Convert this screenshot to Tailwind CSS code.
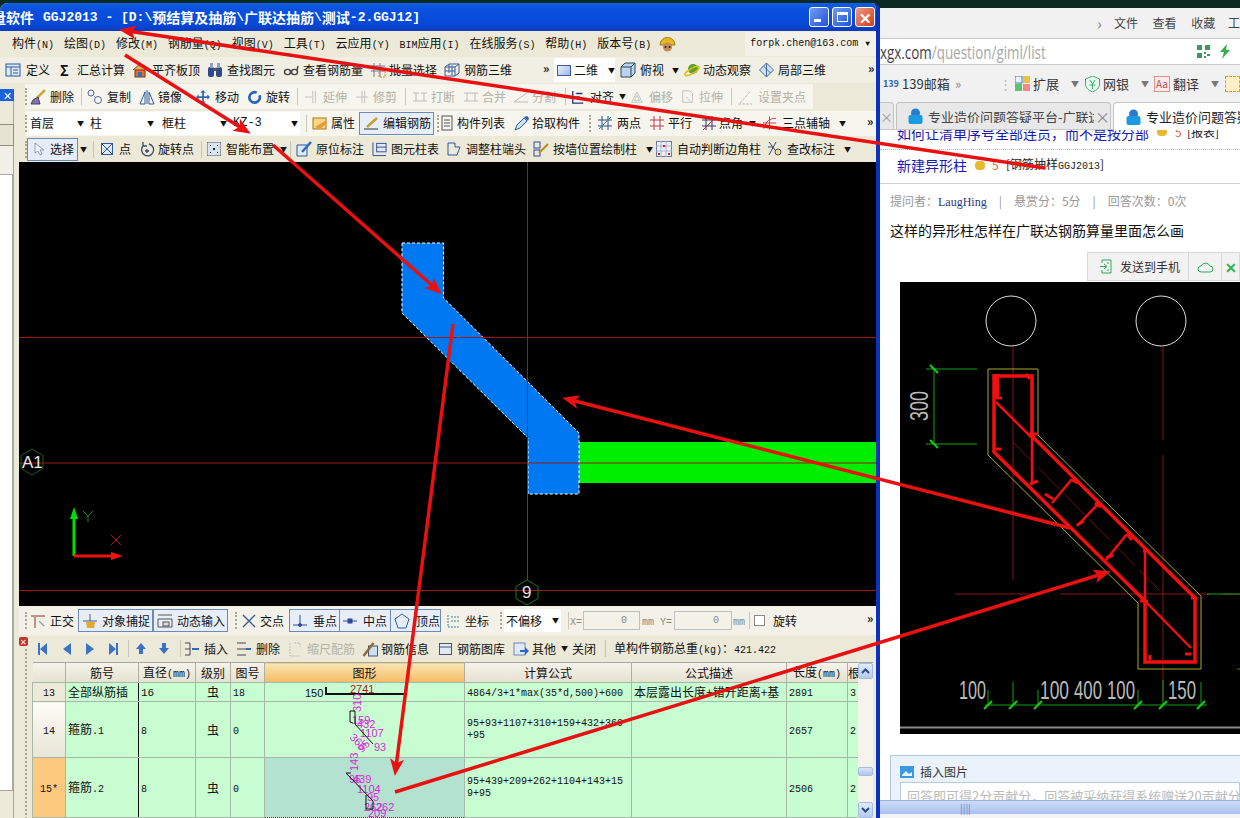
<!DOCTYPE html>
<html lang="zh">
<head>
<meta charset="UTF-8">
<title>GGJ2013</title>
<script src="https://cdn.jsdelivr.net/npm/@tailwindcss/browser@4"></script>
</head>
<body class="relative w-[1240px] h-[818px] overflow-hidden bg-[#0b2a22] text-[12px] leading-none text-[#111] font-['Noto_Sans_CJK_SC','Liberation_Sans',sans-serif] [&_i]:not-italic [&_i]:text-[10px] [&_i]:font-['Liberation_Mono',monospace]">

<div class="flex h-[818px]">

  <!-- drawing program window -->
  <div class="w-[880px] h-[815px] mt-[3px] shrink-0 flex flex-col bg-[#ece9d8] rounded-t-lg border-r-4 border-[#0a32c0] overflow-hidden">
    <div class="h-[28px] shrink-0 flex items-center bg-[linear-gradient(#0f5fe8,#0a52e0_20%,#0648d8_75%,#0a3cc0)] text-white">
      <div class="w-[809px] shrink-0 flex items-center font-bold whitespace-nowrap -ml-[8px] pr-[-8px] text-[14px]">
        <span>量软件</span><span class="font-['Liberation_Mono',monospace] text-[13px] ml-[9px]">GGJ2013 - [D:\</span><span>预结算及抽筋</span><span class="font-['Liberation_Mono',monospace] text-[13px]">\</span><span>广联达抽筋</span><span class="font-['Liberation_Mono',monospace] text-[13px]">\</span><span>测试</span><span class="font-['Liberation_Mono',monospace] text-[13px]">-2.GGJ12]</span>
      </div>
      <div class="flex gap-[3px] ml-[8px]">
        <div class="w-[20px] h-[20px] rounded-[3px] border border-white bg-[linear-gradient(135deg,#6f9cf0,#2252d8)] flex items-end pl-[4px] pb-[4px]"><div class="w-[7px] h-[3px] bg-white"></div></div>
        <div class="w-[20px] h-[20px] rounded-[3px] border border-white bg-[linear-gradient(135deg,#6f9cf0,#2252d8)] flex items-center justify-center"><div class="w-[11px] h-[10px] border border-white border-t-[3px]"></div></div>
        <div class="w-[20px] h-[20px] rounded-[3px] border border-white bg-[linear-gradient(135deg,#f09a80,#d03c18)] flex items-center justify-center text-white text-[15px] font-bold">✕</div>
      </div>
    </div>

    <!-- menu -->
    <div class="h-[26px] shrink-0 flex items-center pl-[12px] whitespace-nowrap">
      <span class="w-[52px]">构件<i>(N)</i></span>
      <span class="w-[52px]">绘图<i>(D)</i></span>
      <span class="w-[52px]">修改<i>(M)</i></span>
      <span class="w-[64px]">钢筋量<i>(Q)</i></span>
      <span class="w-[52px]">视图<i>(V)</i></span>
      <span class="w-[52px]">工具<i>(T)</i></span>
      <span class="w-[64px]">云应用<i>(Y)</i></span>
      <span class="w-[70px]"><i>BIM</i>应用<i>(I)</i></span>
      <span class="w-[76px]">在线服务<i>(S)</i></span>
      <span class="w-[52px]">帮助<i>(H)</i></span>
      <span class="w-[62px]">版本号<i>(B)</i></span>
      <svg class="w-[17px] h-[17px]" viewBox="0 0 17 17"><path d="M1 9a7.5 7.5 0 0 1 15 0z" fill="#e8b820" stroke="#a07810"/><circle cx="8.5" cy="11" r="4.6" fill="#c88a5a"/><circle cx="6.5" cy="11" r="1" fill="#222"/><circle cx="10.500" cy="11" r="1" fill="#222"/></svg>
      <div class="ml-[69px] w-[131px] h-[24px] bg-[#f4f2e8] flex items-center pl-[5px] font-['Liberation_Mono',monospace] text-[10px]">forpk.chen@163.com<span class="ml-[7px] text-[8px]">▼</span></div>
    </div>

    <!-- toolbar row 1 -->
    <div class="h-[26px] shrink-0 flex items-center pl-[5px] bg-[#f1efe4] whitespace-nowrap">
      <span class="flex items-center gap-[5px] w-[55px]"><svg class="w-4 h-4" viewBox="0 0 16 16"><rect x="1" y="2" width="14" height="12" fill="#dfe9f8" stroke="#2b5a9c"/><path d="M1 5h14M6 5v9M8 8h5M8 11h5" stroke="#2b5a9c"/></svg>定义</span>
      <span class="flex items-center gap-[5px] w-[72px]"><span class="w-3 text-[14px] font-bold">Σ</span>汇总计算</span>
      <span class="flex items-center gap-[4px] w-[75px]"><svg class="w-4 h-4" viewBox="0 0 16 16"><path d="M1 8l7-6 7 6" fill="#e8b060" stroke="#7a4a18"/><rect x="3" y="8" width="10" height="7" fill="#e86a30" stroke="#7a3a18"/><rect x="6" y="10" width="4" height="5" fill="#3a6ab0"/></svg>平齐板顶</span>
      <span class="flex items-center gap-[4px] w-[76px]"><svg class="w-4 h-4" viewBox="0 0 16 16"><rect x="1" y="5" width="6" height="10" rx="2" fill="#2b4a8c"/><rect x="9" y="5" width="6" height="10" rx="2" fill="#2b4a8c"/><rect x="3" y="1" width="3" height="5" fill="#8aa0c8"/><rect x="10" y="1" width="3" height="5" fill="#8aa0c8"/><rect x="6" y="6" width="4" height="3" fill="#555"/></svg>查找图元</span>
      <span class="flex items-center gap-[4px] w-[87px]"><svg class="w-4 h-4" viewBox="0 0 16 16" fill="none" stroke="#444" stroke-width="1.4"><ellipse cx="4.5" cy="10" rx="3" ry="2.6"/><ellipse cx="11.5" cy="10" rx="3" ry="2.6"/><path d="M7.5 10h1M14 8l1-4"/></svg>查看钢筋量</span>
      <span class="flex items-center gap-[3px] w-[74px]"><svg class="w-4 h-4" viewBox="0 0 16 16" fill="none" stroke="#6a7aa0"><path d="M1 4h14M1 9h14M4 1v14M10 1v14" /><rect x="9" y="9" width="6" height="6" stroke="#c89030" stroke-dasharray="2 1"/></svg>批量选择</span>
      <span class="flex items-center gap-[4px] w-[99px]"><svg class="w-4 h-4" viewBox="0 0 16 16" fill="none" stroke="#3a5aa0"><path d="M1 5l4-3h10v9l-4 3H1zM1 5h10v9M11 5l4-3M5 2v9M8 3.500v10M1 9h10"/></svg>钢筋三维</span>
      <span class="w-[11px] font-bold text-[12px] mb-[5px]">»</span>
      <span class="flex items-center gap-[3px] w-[61px] h-[24px] bg-white pl-[3px]"><span class="w-[15px] h-[11px] bg-[linear-gradient(135deg,#e8f0fc,#9ab8e8)] border border-[#3a5aa0]"></span>二维<span class="ml-[7px] text-[7px]">▼</span></span>
      <span class="flex items-center gap-[4px] w-[64px] ml-[5px]"><svg class="w-4 h-4" viewBox="0 0 16 16"><path d="M1 5l4-4h10v10l-4 4H1z" fill="#b9d4f0" stroke="#345"/><path d="M1 5h10v10M11 5l4-4" fill="none" stroke="#345"/></svg>俯视<span class="ml-[4px] text-[7px]">▼</span></span>
      <span class="flex items-center gap-[3px] w-[74px]"><svg class="w-4 h-4" viewBox="0 0 16 16"><circle cx="9" cy="7" r="5" fill="#5aa02a"/><ellipse cx="8" cy="9" rx="8" ry="2.500" transform="rotate(-30 8 9)" fill="none" stroke="#d8c020" stroke-width="1.500"/></svg>动态观察</span>
      <span class="flex items-center gap-[3px] w-[110px]"><svg class="w-[17px] h-4" viewBox="0 0 16 16"><path d="M8 1l7 7-7 7-7-7z" fill="#cfe0f6" stroke="#456a9c"/><path d="M5 4l7 7M8 1v14" stroke="#456a9c"/></svg>局部三维</span>
      <span class="font-bold text-[12px] mb-[5px]">»</span>
    </div>

    <div class="flex-1 flex min-h-0">
      <!-- side panel -->
      <div class="w-[19px] shrink-0 flex flex-col pt-[6px] border-r-[5px] border-[#ece9d8]">
        <div class="h-[12px] bg-[#1a62e0] text-white text-[11px] flex items-center justify-center">✕</div>
        <div class="h-[23px] bg-[#ece9d8] border-r border-[#a8a79c]"></div>
        <div class="h-[22px] bg-[#e6e3d2] border-y border-r border-[#8f8e80]"></div>
        <div class="h-[28px] bg-[#f2f0e6] border-r border-[#a8a79c]"></div>
        <div class="flex-1 bg-white border-t border-r-2 border-[#a8a89c]"></div>
        <div class="h-[28px] bg-[#ece9d8] border-t border-r border-[#a8a79c]"></div>
      </div>

      <div class="flex-1 min-w-0 flex flex-col">
        <!-- toolbar row 2 -->
        <div class="h-[27px] shrink-0 flex items-center whitespace-nowrap pl-[6px]">
          <div class="flex items-center h-[25px] w-[788px] bg-[#f6f5ee]">
            <span class="w-[5px] h-[17px] border-l-2 border-dotted border-[#aaa890]"></span>
            <span class="flex items-center gap-[4px] w-[51px]"><svg class="w-4 h-4" viewBox="0 0 16 16"><path d="M15 1L7 9" stroke="#caa840" stroke-width="2.500"/><path d="M8 8l-5 3 -2 4h9z" fill="#8a70c0" stroke="#444"/></svg>删除</span>
            <span class="w-[6px] h-[17px] border-l border-[#c8c6b8]"></span>
            <span class="flex items-center gap-[4px] w-[52px]"><svg class="w-4 h-4" viewBox="0 0 16 16" fill="none" stroke="#4a6a9c"><circle cx="4" cy="4" r="3"/><circle cx="11" cy="11" r="3.500"/><path d="M7 7l2 2" stroke-dasharray="1 1"/></svg>复制</span>
            <span class="flex items-center gap-[3px] w-[57px]"><svg class="w-4 h-4" viewBox="0 0 16 16" fill="none" stroke="#2f5a9c"><path d="M8 1v14M6 3L1 15h5zM10 3l5 12h-5z"/></svg>镜像</span>
            <span class="flex items-center gap-[5px] w-[52px]"><svg class="w-[14px] h-[14px]" viewBox="0 0 16 16" fill="#2f6ab0"><path d="M8 0l3 3H9v4h4V5l3 3-3 3V9H9v4h2l-3 3-3-3h2V9H3v2L0 8l3-3v2h4V3H5z"/></svg>移动</span>
            <span class="flex items-center gap-[4px] w-[49px]"><svg class="w-[14px] h-[14px]" viewBox="0 0 16 16" fill="none" stroke="#2a62c0" stroke-width="3"><path d="M13 6a6 6 0 1 1-3-3"/></svg>旋转</span>
            <span class="w-[7px] h-[17px] border-l border-[#c8c6b8]"></span>
            <div class="flex items-center text-[#b4b2a6]">
            <span class="flex items-center gap-[5px] w-[51px]"><svg class="w-[14px] h-[14px]" viewBox="0 0 16 16" stroke="#bbb" fill="none"><path d="M1 8h8M10 1v14M13 1v14"/></svg>延伸</span>
            <span class="flex items-center gap-[4px] w-[50px]"><svg class="w-[14px] h-[14px]" viewBox="0 0 16 16" stroke="#bbb" fill="none"><path d="M1 8h14M8 1v14M11 1v14"/></svg>修剪</span>
            <span class="w-[7px] h-[17px] border-l border-[#c8c6b8]"></span>
            <span class="flex items-center gap-[3px] w-[51px]"><svg class="w-4 h-4" viewBox="0 0 16 16" stroke="#bbb" fill="none"><path d="M1 4h6M9 4h6M1 12h14M4 4v8M12 4v8"/></svg>打断</span>
            <span class="flex items-center gap-[3px] w-[50px]"><svg class="w-4 h-4" viewBox="0 0 16 16" stroke="#bbb" fill="none"><path d="M1 4h14M1 12h14M4 4v8M12 4v8"/></svg>合并</span>
            <span class="flex items-center gap-[3px] w-[52px]"><svg class="w-4 h-4" viewBox="0 0 16 16" stroke="#bbb" fill="none"><path d="M1 13L15 3M1 13h14"/></svg>分割</span>
            </div>
            <span class="w-[6px] h-[17px] border-l border-[#c8c6b8]"></span>
            <span class="flex items-center gap-[5px] w-[59px]"><svg class="w-[14px] h-[14px]" viewBox="0 0 16 16" fill="none" stroke="#223a7a" stroke-width="1.500"><path d="M2 1v14h12M6 4h7M6 8h4"/></svg>对齐<span class="text-[7px]">▼</span></span>
            <div class="flex items-center text-[#b4b2a6]">
            <span class="flex items-center gap-[5px] w-[51px]"><svg class="w-[14px] h-[14px]" viewBox="0 0 16 16" stroke="#bbb" fill="none"><path d="M2 14l6-12 6 12zM5 12l3-6 3 6z"/></svg>偏移</span>
            <span class="flex items-center gap-[4px] w-[50px]"><svg class="w-[14px] h-[14px]" viewBox="0 0 16 16" stroke="#bbb" fill="none"><path d="M2 1h8l3 3v10H2zM6 8l5 5"/></svg>拉伸</span>
            <span class="w-[6px] h-[17px] border-l border-[#c8c6b8]"></span>
            <span class="flex items-center gap-[5px]"><svg class="w-4 h-4" viewBox="0 0 16 16" stroke="#bbb" fill="none"><path d="M3 14L13 3M1 15h14" stroke-dasharray="3 1"/></svg>设置夹点</span>
            </div>
          </div>
        </div>

        <!-- toolbar row 3 -->
        <div class="h-[26px] shrink-0 flex items-center whitespace-nowrap pl-[6px]">
          <div class="flex items-center h-[25px] w-[851px] bg-[#f6f5ee] [&>*]:shrink-0">
            <span class="w-[4px] h-[17px] border-l-2 border-dotted border-[#aaa890]"></span>
            <span class="flex items-center justify-between w-[59px] h-[23px] bg-white pl-[1px] pr-[4px]">首层<span class="text-[7px]">▼</span></span>
            <span class="flex items-center justify-between w-[69px] h-[23px] bg-white pl-[2px] pr-[3px]">柱<span class="text-[7px]">▼</span></span>
            <span class="flex items-center justify-between w-[73px] h-[23px] bg-white pl-[5px] pr-[3px]">框柱<span class="text-[7px]">▼</span></span>
            <span class="flex items-center justify-between w-[70px] h-[23px] bg-white pl-[3px] pr-[2px]"><i class="text-[12px]!">KZ-3</i><span class="text-[7px]">▼</span></span>
            <span class="w-[6px] h-[17px] ml-[6px] border-l border-[#c8c6b8]"></span>
            <span class="flex items-center gap-[3px] w-[47px]"><svg class="w-4 h-4" viewBox="0 0 16 16"><rect x="1" y="3" width="13" height="11" fill="#f8d880" stroke="#a87818"/><path d="M3 12l10-6 2 2-7 6z" fill="#e89838"/></svg>属性</span>
            <span class="flex items-center gap-[4px] w-[75px] h-[23px] pl-[3px] bg-[#e8eef8] border border-[#6a8ab8]"><svg class="w-4 h-4" viewBox="0 0 16 16"><path d="M4 12L14 3" stroke="#c8a030" stroke-width="2.500"/><path d="M1 14h14" stroke="#333"/></svg>编辑钢筋</span>
            <span class="w-[4px] h-[17px] ml-[3px] border-l-2 border-dotted border-[#aaa890]"></span>
            <span class="flex items-center gap-[4px] w-[73px]"><svg class="w-3 h-4" viewBox="0 0 12 16" fill="none" stroke="#555"><rect x="1" y="1" width="10" height="14"/><path d="M3 5h6M3 8h6M3 11h6"/></svg>构件列表</span>
            <span class="flex items-center gap-[2px] w-[75px]"><svg class="w-4 h-4" viewBox="0 0 16 16"><path d="M1 15l2-5 7-7 3 3-7 7z" fill="#cfe0f6" stroke="#2f5a9c"/><path d="M10 2l4 4 1-3-2-2z" fill="#2a5ab0"/></svg>拾取构件</span>
            <span class="w-[8px] h-[17px] border-l-2 border-dotted border-[#aaa890]"></span>
            <span class="flex items-center gap-[4px] w-[52px]"><svg class="w-4 h-4" viewBox="0 0 16 16" fill="none" stroke="#2a4a9c"><path d="M1 5h14M1 11h14M5 1v14M11 1v14"/><path d="M2 14L14 2" stroke="#3a9040"/></svg>两点</span>
            <span class="flex items-center gap-[3px] w-[52px]"><svg class="w-4 h-4" viewBox="0 0 16 16" fill="none" stroke="#c03a5a"><path d="M1 5h14M1 11h14M5 1v14M11 1v14"/></svg>平行</span>
            <span class="flex items-center gap-[2px] w-[61px]"><svg class="w-4 h-4" viewBox="0 0 16 16" fill="none" stroke="#2a3a7c"><path d="M1 5h14M1 11h14M5 1v14M11 1v14"/><path d="M2 15L14 3" stroke="#d02020"/></svg>点角<span class="text-[7px] ml-[4px]">▼</span></span>
            <span class="flex items-center gap-[5px] w-[105px]"><svg class="w-[15px] h-4" viewBox="0 0 16 16" fill="none" stroke="#c83a3a"><path d="M2 14C4 6 8 3 15 3M1 8h14M8 1v14"/></svg>三点辅轴<span class="text-[7px] ml-[4px]">▼</span></span>
            <span class="font-bold text-[12px] mb-[5px]">»</span>
          </div>
        </div>

        <!-- toolbar row 4 -->
        <div class="h-[26px] shrink-0 flex items-center whitespace-nowrap pl-[6px]">
          <span class="w-[2px] h-[17px] border-l-2 border-dotted border-[#aaa890]"></span>
          <span class="flex items-center gap-[5px] w-[51px] h-[23px] pl-[6px] bg-[#e6edf8] border border-[#6a8ab8]"><svg class="w-[11px] h-[14px]" viewBox="0 0 11 14"><path d="M1 1v10l3-2 2 4 2-1-2-4h4z" fill="#fff" stroke="#8a9ab8"/></svg>选择</span>
          <span class="text-[7px] w-[15px] pl-[2px]">▼</span>
          <span class="w-[8px] h-[17px] border-l border-[#c8c6b8]"></span>
          <span class="flex items-center gap-[6px] w-[38px]"><svg class="w-3 h-3" viewBox="0 0 12 12" fill="#dfe9f8" stroke="#2f5a9c"><rect x="0.500" y="0.500" width="11" height="11"/><path d="M1 1l10 10M11 1L1 11"/></svg>点</span>
          <span class="flex items-center gap-[3px] w-[62px]"><svg class="w-4 h-4" viewBox="0 0 16 16" fill="none" stroke="#3a4a6a" stroke-width="1.300"><path d="M4 5a6 6 0 1 0 6-2M4 1v4h4"/><path d="M8 8v4M6 10h4"/></svg>旋转点</span>
          <span class="w-[6px] h-[17px] border-l border-[#c8c6b8]"></span>
          <span class="flex items-center gap-[5px] w-[83px]"><svg class="w-[14px] h-[14px]" viewBox="0 0 14 14"><rect width="14" height="14" fill="#d8e4f4" stroke="#555"/><path d="M3 3h1v1H3zM10 3h1v1h-1zM3 10h1v1H3zM10 10h1v1h-1zM6 6h2v2H6z" fill="#222"/></svg>智能布置<span class="text-[7px] ml-[1px]">▼</span></span>
          <span class="w-[6px] h-[17px] border-l border-[#c8c6b8]"></span>
          <span class="flex items-center gap-[4px] w-[76px]"><svg class="w-4 h-4" viewBox="0 0 16 16"><path d="M1 4h10v11H1z" fill="#dfe9f8" stroke="#2f5a9c"/><path d="M6 11L15 1" stroke="#2f6ac0" stroke-width="2.500"/></svg>原位标注</span>
          <span class="flex items-center gap-[4px] w-[74px]"><svg class="w-[15px] h-4" viewBox="0 0 16 16" fill="none" stroke="#2f4a9c"><path d="M1 1v14h14"/><rect x="5" y="2" width="10" height="9" fill="#dfe9f8"/><path d="M5 6h10"/></svg>图元柱表</span>
          <span class="flex items-center gap-[4px] w-[87px]"><svg class="w-4 h-4" viewBox="0 0 16 16" fill="none" stroke="#2f5a9c"><path d="M2 2h7v4h5l-3 8H2z"/></svg>调整柱端头</span>
          <span class="flex items-center gap-[4px] w-[123px]"><svg class="w-4 h-4" viewBox="0 0 16 16" fill="none" stroke="#2f4a9c"><rect x="1" y="1" width="6" height="6"/><rect x="1" y="9" width="6" height="6"/><path d="M6 12L15 3" stroke="#b88a20" stroke-width="2"/></svg>按墙位置绘制柱<span class="text-[7px] ml-[5px]">▼</span></span>
          <span class="flex items-center gap-[5px] w-[111px]"><svg class="w-4 h-4" viewBox="0 0 16 16"><rect x="0.500" y="0.500" width="15" height="15" fill="#eef2fa" stroke="#6a7ab0"/><path d="M0 5h16M0 10h16M5 0v16M10 0v16" stroke="#aab4d0"/><rect x="7" y="4" width="2" height="2" fill="#d02020"/><rect x="2" y="12" width="2" height="2" fill="#d02020"/><rect x="12" y="12" width="2" height="2" fill="#d02020"/></svg>自动判断边角柱</span>
          <span class="flex items-center gap-[4px]"><svg class="w-4 h-4" viewBox="0 0 16 16" fill="none" stroke="#3a4a6a"><path d="M2 1l6 8M9 1L2 14M1 6h6"/><circle cx="11" cy="11" r="3" fill="#f0d890"/></svg>查改标注<span class="text-[7px] ml-[5px]">▼</span></span>
        </div>

        <!-- canvas -->
        <svg class="block w-[857px] h-[444px] shrink-0 bg-black" viewBox="19 162 857 444" font-family="Liberation Sans, sans-serif">
          <rect x="579" y="442" width="298" height="41" fill="#00ee00"/>
          <path d="M402 243H443.500V298L579 433V494H528V438L402 313Z" fill="#0078f2" stroke="#fff" stroke-dasharray="3 2"/>
          <path d="M19 337.500H877M19 463H877M19 590.500H877M527.500 162V463" stroke="#9a1a1a" fill="none"/>
          <path d="M527.500 463V580" stroke="#1a6a1a"/>
          <path d="M32 449l11 6.500v13L32 475l-11-6.500v-13z" fill="none" stroke="#1c5a1c"/>
          <text x="22" y="468" fill="#e8e8e8" font-size="17">A1</text>
          <path d="M527 580l11 6.500v12L527 605l-11-6.500v-12z" fill="none" stroke="#1c7a1c"/>
          <text x="522" y="598" fill="#e0e0e0" font-size="17">9</text>
          <path d="M74 556V516" stroke="#00e000" stroke-width="3"/><path d="M74 507l4 12h-8z" fill="#00e000"/>
          <path d="M74 556h40" stroke="#f01010" stroke-width="3"/><path d="M123 556l-12 4v-8z" fill="#f01010"/>
          <path d="M83 511l5 5 5-5M88 516v6" stroke="#1c8a1c" fill="none"/>
          <path d="M111 535l10 10M121 535l-10 10" stroke="#a01818" fill="none"/>
        </svg>

        <!-- snap bar -->
        <div class="h-[29px] shrink-0 flex items-center whitespace-nowrap pl-[6px] bg-[#f4f2e8]">
          <span class="w-[5px] h-[17px] border-l-2 border-dotted border-[#aaa890]"></span>
          <span class="flex items-center gap-[4px] w-[48px]"><svg class="w-4 h-4" viewBox="0 0 16 16" fill="none" stroke="#c09088" stroke-width="2"><path d="M1 3h14M5 3v12"/><path d="M9 8l5 5" stroke="#8aa0b8" stroke-width="1.200"/></svg>正交</span>
          <span class="flex items-center gap-[4px] w-[75px] h-[23px] pl-[3px] bg-[#e8eef8] border border-[#6a8ab8]"><svg class="w-4 h-4" viewBox="0 0 16 16"><path d="M1 8h14M8 1v7" stroke="#556"/><path d="M4 9h9l-1 6H5z" fill="#e8a830"/></svg>对象捕捉</span>
          <span class="flex items-center gap-[4px] w-[75px] h-[23px] pl-[3px] bg-[#e8eef8] border border-[#6a8ab8]"><svg class="w-4 h-4" viewBox="0 0 16 16" fill="none" stroke="#555"><path d="M1 2h14M1 6h14M1 6v8h14V6"/><rect x="6" y="9" width="6" height="4" fill="#ddd"/></svg>动态输入</span>
          <span class="w-[7px] h-[17px] ml-[7px] border-l-2 border-dotted border-[#aaa890]"></span>
          <span class="flex items-center gap-[4px] w-[47px]"><svg class="w-[14px] h-[14px]" viewBox="0 0 14 14" stroke="#2f5a9c" stroke-width="1.400"><path d="M1 1l12 12M13 1L1 13"/></svg>交点</span>
          <span class="flex items-center gap-[6px] w-[51px] h-[23px] pl-[3px] bg-[#e8eef8] border border-[#6a8ab8]"><svg class="w-[14px] h-[14px]" viewBox="0 0 14 14" stroke="#2f4a9c" fill="#2f4a9c"><path d="M7 1v9M0 11h14" fill="none"/><circle cx="7" cy="11" r="1.500"/></svg>垂点</span>
          <span class="flex items-center gap-[6px] w-[51px] h-[23px] pl-[3px] bg-[#e8eef8] border border-l-0 border-[#6a8ab8]"><svg class="w-[14px] h-[14px]" viewBox="0 0 14 14" stroke="#2f4a9c" fill="#2f4a9c"><path d="M0 7h14"/><rect x="5" y="5" width="4" height="4"/></svg>中点</span>
          <span class="flex items-center gap-[6px] w-[50px] h-[23px] pl-[3px] bg-[#e8eef8] border border-l-0 border-[#6a8ab8]"><svg class="w-[17px] h-4" viewBox="0 0 16 16" stroke="#2f5a9c" fill="none"><path d="M8 1l7 5-3 9H4L1 6z"/></svg>顶点</span>
          <span class="flex items-center gap-[3px] w-[54px] ml-[5px]"><svg class="w-4 h-4" viewBox="0 0 16 16" fill="none" stroke="#3a8aa0"><path d="M2 2v12h12M5 4h8M5 8h8" stroke-dasharray="2 1"/></svg>坐标</span>
          <span class="w-[4px] h-[17px] border-l-2 border-dotted border-[#aaa890]"></span>
          <span class="flex items-center justify-between w-[57px] h-[23px] bg-white pl-[2px] pr-[2px]">不偏移<span class="text-[7px]">▼</span></span>
          <span class="w-[2px] h-[17px] ml-[7px] border-l border-[#c8c6b8]"></span>
          <span class="w-[13px] text-[#8a8a80]"><i>X=</i></span>
          <span class="flex items-center justify-end w-[57px] h-[19px] bg-[#f4f2e8] border border-[#b8c4c4] text-[#888] pr-[12px]"><i>0</i></span>
          <span class="w-[20px] pl-[2px] text-[#888]"><i>mm</i></span>
          <span class="w-[14px] text-[#8a8a80]"><i>Y=</i></span>
          <span class="flex items-center justify-end w-[58px] h-[19px] bg-[#f4f2e8] border border-[#b8c4c4] text-[#888] pr-[12px]"><i>0</i></span>
          <span class="w-[17px] pl-[1px] text-[#888]"><i>mm</i></span>
          <span class="w-[5px] h-[17px] border-l border-[#c8c6b8]"></span>
          <span class="w-[11px] h-[11px] bg-white border border-[#888]"></span>
          <span class="ml-[8px] w-[94px]">旋转</span>
          <span class="font-bold text-[12px] mb-[5px]">»</span>
        </div>

        <!-- rebar panel -->
        <div class="flex-1 min-h-0 flex">
          <div class="w-[13px] shrink-0 pt-[2px] relative">
            <div class="w-[9px] h-[9px] rounded-[2px] bg-[#c83030] text-white text-[8px] leading-[9px] text-center">✕</div>
            <div class="ml-[6px] mt-[3px] h-[170px] border-l-2 border-dotted border-[#a8a690]"></div>
          </div>
          <div class="flex-1 min-w-0 flex flex-col">
            <div class="h-[27px] shrink-0 flex items-center whitespace-nowrap pl-[6px]">
              <svg class="w-[9px] h-[12px] mr-[15px]" viewBox="0 0 9 12" fill="#3a72c8"><path d="M0 0h2v12H0zM9 0v12L2 6z"/></svg>
              <svg class="w-[9px] h-[12px] mr-[15px]" viewBox="0 0 9 12" fill="#3a72c8"><path d="M9 0v12L1 6z"/></svg>
              <svg class="w-[9px] h-[12px] mr-[14px]" viewBox="0 0 9 12" fill="#3a72c8"><path d="M0 0v12l8-6z"/></svg>
              <svg class="w-[9px] h-[12px] mr-[10px]" viewBox="0 0 9 12" fill="#3a72c8"><path d="M9 0H7v12h2zM0 0v12l7-6z"/></svg>
              <span class="w-[8px] h-[17px] border-l border-[#c8c6b8]"></span>
              <svg class="w-[10px] h-[11px] mr-[13px]" viewBox="0 0 10 11" fill="#3a72c8"><path d="M5 0l5 6H7v5H3V6H0z"/></svg>
              <svg class="w-[10px] h-[11px] mr-[11px]" viewBox="0 0 10 11" fill="#3a72c8"><path d="M5 11L0 5h3V0h4v5h3z"/></svg>
              <span class="w-[4px] h-[17px] border-l border-[#c8c6b8]"></span>
              <span class="flex items-center gap-[4px] w-[52px]"><svg class="w-4 h-4" viewBox="0 0 16 16" fill="none" stroke="#445"><path d="M1 2h5M1 8h5M1 14h5M6 2v12"/><path d="M8 8h7" stroke="#2a6ac0" stroke-width="2"/></svg>插入</span>
              <span class="flex items-center gap-[4px] w-[53px]"><svg class="w-4 h-4" viewBox="0 0 16 16" fill="none" stroke="#445"><path d="M1 2h9M1 8h9M1 14h9"/><path d="M10 8h5" stroke="#2a6ac0" stroke-width="2"/></svg>删除</span>
              <span class="flex items-center gap-[6px] w-[73px] text-[#b4b2a6]"><svg class="w-3 h-4" viewBox="0 0 12 16" fill="none" stroke="#bbb"><path d="M1 2v13h10M5 2h6v4" stroke-dasharray="2 1"/></svg>缩尺配筋</span>
              <span class="flex items-center gap-[2px] w-[77px]"><svg class="w-[17px] h-4" viewBox="0 0 16 16"><rect x="6" y="5" width="9" height="10" fill="#cfe0f6" stroke="#456"/><path d="M1 15L11 2" stroke="#8a6a40" stroke-width="2.500"/></svg>钢筋信息</span>
              <span class="flex items-center gap-[5px] w-[74px]"><svg class="w-[13px] h-3" viewBox="0 0 13 12"><rect x="0.500" y="0.500" width="12" height="11" fill="#dfe9f8" stroke="#456"/><path d="M0 4h13" stroke="#456"/></svg>钢筋图库</span>
              <span class="flex items-center gap-[3px] w-[59px]"><svg class="w-4 h-4" viewBox="0 0 16 16"><rect x="1" y="2" width="11" height="12" fill="#dfe9f8" stroke="#6a8ab8"/><path d="M7 9h5V6l4 4-4 4v-3H7z" fill="#2a6ac0"/></svg>其他<span class="text-[7px] ml-[2px]">▼</span></span>
              <span class="w-[33px]">关闭</span>
              <span class="w-[9px] h-[17px] border-l border-[#c8c6b8]"></span>
              <span>单构件钢筋总重<i>(kg)</i>：<i>421.422</i></span>
            </div>

            <!-- rebar table -->
            <div class="flex-1 min-h-0 flex">
              <div class="relative w-[826px] shrink-0 overflow-hidden">
                <table class="table-fixed border-collapse w-[826px] text-[#111] border-t border-[#a0a8a8]">
                  <colgroup><col class="w-[33px]"><col class="w-[73px]"><col class="w-[57px]"><col class="w-[35px]"><col class="w-[34px]"><col class="w-[200px]"><col class="w-[167px]"><col class="w-[155px]"><col class="w-[61px]"><col class="w-[11px]"></colgroup>
                  <thead>
                    <tr class="h-[20px] bg-[linear-gradient(#f5f3ea,#e4e1d0)] text-center [&_th]:font-normal [&_th]:border-r [&_th]:border-[#b0aea0]">
                      <th></th><th>筋号</th><th>直径<i>(mm)</i></th><th>级别</th><th>图号</th>
                      <th class="bg-[linear-gradient(#fbe3b0,#f5bc66)]">图形</th>
                      <th>计算公式</th><th>公式描述</th><th>长度<i>(mm)</i></th><th>根</th>
                    </tr>
                  </thead>
                  <tbody class="bg-[#c8fdd2] [&_td]:border [&_td]:border-[#a8b8a8] [&_td]:px-[2px] [&_td]:overflow-hidden">
                    <tr class="h-[19px]">
                      <td class="bg-[#ece9d8] text-center"><i>13</i></td>
                      <td class="border-r-[#111]! whitespace-nowrap">全部纵筋插</td>
                      <td><i class="text-[11px]!">16</i></td><td class="text-center">虫</td><td><i>18</i></td><td></td>
                      <td class="whitespace-nowrap"><i>4864/3+1*max(35*d,500)+600</i></td>
                      <td class="whitespace-nowrap">本层露出长度+错开距离+基</td>
                      <td><i>2891</i></td><td><i>3</i></td>
                    </tr>
                    <tr class="h-[56px]">
                      <td class="bg-[linear-gradient(#fdfcf6,#e8e5d6)] text-center"><i>14</i></td>
                      <td class="border-r-[#111]!">箍筋<i>.1</i></td>
                      <td><i>8</i></td><td class="text-center">虫</td><td><i>0</i></td><td></td>
                      <td class="leading-[12px]"><i class="block">95+93+1107+310+159+432+360</i><i class="block">+95</i></td>
                      <td></td><td><i>2657</i></td><td><i>2</i></td>
                    </tr>
                    <tr class="h-[60px]">
                      <td class="bg-[#fdc97f] text-center"><i>15*</i></td>
                      <td class="border-r-[#111]!">箍筋<i>.2</i></td>
                      <td><i>8</i></td><td class="text-center">虫</td><td><i>0</i></td>
                      <td class="bg-[#b3e3d0] border-dotted! border-[#333]!"></td>
                      <td class="leading-[12px]"><i class="block">95+439+209+262+1104+143+15</i><i class="block">9+95</i></td>
                      <td></td><td><i>2506</i></td><td><i>2</i></td>
                    </tr>
                  </tbody>
                </table>
                <!-- rebar sketches drawn inside the shape column -->
                <svg class="absolute left-[232px] top-[20px] w-[200px] h-[135px]" viewBox="264 683 200 135" font-family="Liberation Sans, sans-serif" font-size="11">
                  <text x="305" y="698" fill="#111" font-size="11">150</text>
                  <path d="M326 688v7H404" fill="none" stroke="#111" stroke-width="2"/>
                  <text x="350" y="694" fill="#b01818">2741</text>
                  <g fill="#d828d8">
                    <text transform="translate(361 713) rotate(-90)">310</text>
                    <text x="352" y="725">159</text><text x="357" y="729">432</text>
                    <text x="360" y="738">1107</text>
                    <text transform="translate(349 739) rotate(45)">366</text>
                    <text x="374" y="752">93</text>
                    <text transform="translate(362 754) rotate(-45)">95</text>
                    <text transform="translate(358 772) rotate(-90)">143</text>
                    <text x="349" y="784">95</text><text x="353" y="784">439</text>
                    <text x="357" y="794">1104</text>
                    <text x="367" y="802">95</text>
                    <text x="364" y="812">262</text><text x="376" y="812">262</text>
                    <text x="368" y="818">209</text>
                  </g>
                  <path d="M353 724l-3-1v-11h5v13l18 20" fill="none" stroke="#111"/>
                  <path d="M346 774l27 28v8h-7v-14M346 774h5" fill="none" stroke="#111"/>
                </svg>
              </div>
              <!-- table scrollbar -->
              <div class="w-[15px] shrink-0 flex flex-col bg-[#f4f3ec] border-t border-[#a0a8a8]">
                <div class="h-[16px] rounded-[2px] bg-[linear-gradient(#e0ecfc,#b4ccf0)] border border-[#a8bce0] flex items-center justify-center"><svg class="w-[9px] h-[6px]" viewBox="0 0 9 6" fill="none" stroke="#2a4a8c" stroke-width="2"><path d="M1 5l3.500-3.500L8 5"/></svg></div>
                <div class="h-[88px]"></div>
                <div class="h-[9px] rounded-[2px] bg-[linear-gradient(#d8e4f8,#b0c6ec)] border border-[#a8bce0]"></div>
                <div class="flex-1"></div>
                <div class="h-[16px] rounded-[2px] bg-[linear-gradient(#e0ecfc,#b4ccf0)] border border-[#a8bce0] flex items-center justify-center"><svg class="w-[9px] h-[6px]" viewBox="0 0 9 6" fill="none" stroke="#2a4a8c" stroke-width="2"><path d="M1 1l3.500 3.500L8 1"/></svg></div>
              </div>
            </div>
          </div>
        </div>
      </div>
    </div>
  </div>

  <!-- browser window -->
  <div class="w-[360px] shrink-0 flex flex-col text-[#333] pt-[8px]">
    <div class="h-[30px] shrink-0 bg-[#f1f1f1] flex items-center whitespace-nowrap text-[12px] text-[#444] pl-[217px]">
      <span class="text-[#888] text-[16px] w-[18px]">›</span><span class="w-[41px]">文件</span><span class="w-[41px]">查看</span><span class="w-[39px]">收藏</span><span>工</span>
    </div>
    <div class="h-[27px] shrink-0 bg-white border-y border-[#c8c8c8] flex items-center whitespace-nowrap">
      <div class="w-[317px] shrink-0"><span class="block w-[300px] origin-left scale-x-[0.745] text-[18px] font-['Open_Sans',sans-serif] text-[#444]">xgx.com<span class="text-[#a8a8a8]">/question/giml/list</span></span></div>
      <svg class="w-[13px] h-[13px]" viewBox="0 0 13 13" fill="#3a9a5a"><path d="M0 0h5v5H0zM8 0h5v5H8zM0 8h5v5H0zM7 7h2v2H7zM10 9h3v2h-3zM7 11h2v2H7z"/></svg>
      <svg class="w-[12px] h-[15px] ml-[9px]" viewBox="0 0 12 15" fill="#2fb04a"><path d="M8 0L1 8h4l-2 7 8-9H7z"/></svg>
    </div>
    <div class="h-[37px] shrink-0 bg-[#f1f1f1] flex items-center whitespace-nowrap text-[13px]">
      <span class="ml-[3px] w-[17px] text-[9px] font-bold text-[#2a62b0]">139</span>
      <span class="ml-[2px] w-[53px]">139邮箱</span>
      <span class="text-[#888] w-[44px]">»</span>
      <span class="text-[#bbb] w-[16px]">⋮</span>
      <span class="flex items-center gap-[3px] w-[70px]"><svg class="w-[15px] h-[15px]" viewBox="0 0 15 15"><rect width="7" height="7" fill="none" stroke="#3a7ac8"/><rect x="8" width="7" height="7" fill="#f0c040"/><rect y="8" width="7" height="7" fill="#60c070"/><rect x="8" y="8" width="7" height="7" fill="#f08a8a"/></svg>扩展<span class="text-[#777] text-[8px] ml-[9px]">▼</span></span>
      <span class="flex items-center gap-[3px] w-[69px]"><svg class="w-[15px] h-[16px]" viewBox="0 0 15 16"><path d="M7.500 0l7 3v5c0 4-3 6-7 8-4-2-7-4-7-8V3z" fill="#e8f8ee" stroke="#3aaa6a"/><path d="M5 4l2.500 4L10 4M4.500 9h6M7.500 8v5" stroke="#3aaa6a" fill="none"/></svg>网银<span class="text-[#777] text-[8px] ml-[9px]">▼</span></span>
      <span class="flex items-center gap-[3px] w-[71px]"><span class="w-[16px] h-[16px] border border-[#e09090] bg-[#fdeaea] text-[#c05050] text-[10px] flex items-center justify-center">Aa</span>翻译<span class="text-[#777] text-[8px] ml-[9px]">▼</span></span>
      <span class="w-[15px] h-[16px] border border-dashed border-[#e0a030] bg-[#fdf0c8]"></span>
    </div>
    <div class="relative z-10 h-[28px] shrink-0 bg-[#f1f1f1] flex items-end whitespace-nowrap text-[13px] border-b border-[#c8c8c8]">
      <div class="w-[17px] h-[27px] bg-[#e8e8e8] border-r border-t border-[#c4c4c4] rounded-tr text-[#999] flex items-center justify-center">×</div>
      <div class="ml-[2px] w-[221px] h-[27px] bg-[#e8e8e8] border border-b-0 border-[#c4c4c4] rounded-t flex items-center pl-[11px]">
        <svg class="w-[15px] h-[16px]" viewBox="0 0 15 16"><circle cx="7.500" cy="5" r="4.500" fill="#2a7ad0"/><rect x="0.500" y="7" width="14" height="9" rx="2" fill="#1a9ae0"/></svg>
        <span class="ml-[5px] w-[166px] overflow-hidden text-[#444]">专业造价问题答疑平台-广联达!</span><span class="ml-[1px] text-[#888] text-[15px]">×</span>
      </div>
      <div class="ml-[2px] flex-1 h-[28px] -mb-px bg-white border border-b-0 border-[#c4c4c4] rounded-tl flex items-center pl-[12px]">
        <svg class="w-[15px] h-[16px]" viewBox="0 0 15 16"><circle cx="7.500" cy="5" r="4.500" fill="#2a7ad0"/><rect x="0.500" y="7" width="14" height="9" rx="2" fill="#1a9ae0"/></svg>
        <span class="ml-[5px] text-[#222]">专业造价问题答疑平台</span>
      </div>
    </div>

    <!-- question page -->
    <div class="flex-1 min-h-0 bg-white flex flex-col overflow-hidden">
      <div class="h-[27px] shrink-0 -mt-[7px] pl-[17px] pt-[3px] flex items-start whitespace-nowrap border-b border-dotted border-[#bbb] text-[14px] text-[#222]">
        <span class="text-[#1a1ab0] w-[260px]">如何让清单序号全部连员，而不是按分部</span>
        <span class="w-[10px] h-[8px] rounded-sm bg-[#e8b830] mt-[2px]"></span>
        <span class="ml-[8px] text-[#d86a30] text-[12px] w-[12px]">5</span><span class="text-[12px]">[报表]</span>
      </div>
      <div class="h-[34px] shrink-0 pl-[17px] pb-[3px] flex items-center whitespace-nowrap border-b border-[#d0d0d0]">
        <span class="text-[#1a1ab0] text-[14px] w-[78px]">新建异形柱</span>
        <span class="w-[10px] h-[9px] rounded-sm bg-[#e8b830]"></span>
        <span class="ml-[7px] text-[#d86a30] w-[14px]">5</span><span class="text-[#222]">[钢筋抽样<i class="text-[10px]!">GGJ2013</i>]</span>
      </div>
      <div class="h-[34px] shrink-0 pl-[10px] flex items-center whitespace-nowrap text-[12px] text-[#999]">
        <span>提问者：<span class="text-[#223a7a] font-['Liberation_Serif',serif]">LaugHing</span></span>
        <span class="mx-[12px]">|</span><span>悬赏分：5分</span>
        <span class="mx-[12px]">|</span><span>回答次数：0次</span>
      </div>
      <div class="h-[24px] shrink-0 pl-[10px] flex items-center whitespace-nowrap text-[14px] text-[#111]">这样的异形柱怎样在广联达钢筋算量里面怎么画</div>
      <div class="h-[29px] shrink-0 flex justify-end mt-[10px]">
        <div class="flex h-[29px] w-[153px] bg-[#f2f2f2] border border-[#d8d8d8] items-center whitespace-nowrap">
          <span class="flex items-center gap-[7px] w-[101px] pl-[11px] h-full border-r border-[#d8d8d8]"><svg class="w-[14px] h-[15px]" viewBox="0 0 14 15" fill="none" stroke="#2fa860"><path d="M3 4V1h9v13H3v-3M1 7.500h6M5 5l3 2.500L5 10M8 4h2M8 11h2"/></svg>发送到手机</span>
          <span class="flex items-center justify-center w-[33px] h-full border-r border-[#d8d8d8]"><svg class="w-[17px] h-[12px]" viewBox="0 0 17 12" fill="none" stroke="#2fa860"><path d="M4 11a3 3 0 0 1 0-6 5 5 0 0 1 9 0 3 3 0 0 1 0 6z"/></svg></span>
          <span class="text-[#2fb04a] font-bold pl-[3px] text-[14px]">✕</span>
        </div>
      </div>

      <!-- question picture -->
      <svg class="block ml-[20px] mt-[1px] w-[340px] h-[452px] shrink-0 bg-black" viewBox="900 282 340 452" font-family="Liberation Sans, sans-serif">
        <circle cx="1011" cy="321" r="25" fill="none" stroke="#ddd"/>
        <circle cx="1161" cy="321" r="25" fill="none" stroke="#ddd"/>
        <path d="M1013 346V580M1163 346V440M1163 455V700M955 594H1040M1060 594H1210M1223 594H1240" stroke="#8a1414" fill="none"/>
        <path d="M1013 442L1163 594" stroke="#701010" stroke-dasharray="30 6" fill="none"/>
        <path d="M988 369H1038V435L1201 596V669H1138V603L988 455Z" fill="none" stroke="#a8a830"/>
        <path d="M994 376H1032V436L1195 598V662H1145V601L994 452Z" fill="none" stroke="#f01010" stroke-width="3.500"/>
        <path d="M996 398V374" stroke="#f01010" stroke-width="6"/>
        <path d="M996 402L1032 438M1145 601L1191 648M1032 436V484M1145 551V601M1052 503L1072 479M1077 526L1099 503M1106 560L1127 534" fill="none" stroke="#f01010" stroke-width="2.500"/>
        <path d="M1030 434h8M1030 484l8-3M1045 494l8 5M1072 480l6 3M1095 503l6 4M1077 525l7-4M1106 558l7-3M1127 534l5 6M1143 551h7M1140 601h8M1191 598h6M1185 654h6M1150 660v-5M998 374v5M1026 374l4 5M996 398h6M996 449h5" fill="none" stroke="#f01010" stroke-width="3"/>
        <path d="M934 369V444M926 369H977M926 444H977M985 705H1207M988 690V705M1013 682V705M1038 690V705M1138 690V705M1163 680V705M1201 682V705M1207 594H1240M1237 669H1240" stroke="#12a012" fill="none"/>
        <path d="M930 365l8 8M930 440l8 8M984 709l8-8M1009 709l8-8M1034 709l8-8M1134 709l8-8M1159 709l8-8M1197 709l8-8" stroke="#12d012" stroke-width="2"/>
        <text transform="translate(928 421) rotate(-90)" fill="#bbb" font-size="26" textLength="30" lengthAdjust="spacingAndGlyphs">300</text>
        <g fill="#bbb" font-size="25">
          <text x="959" y="699" textLength="27" lengthAdjust="spacingAndGlyphs">100</text>
          <text x="1040" y="699" textLength="29" lengthAdjust="spacingAndGlyphs">100</text>
          <text x="1074" y="699" textLength="28" lengthAdjust="spacingAndGlyphs">400</text>
          <text x="1107" y="699" textLength="28" lengthAdjust="spacingAndGlyphs">100</text>
          <text x="1168" y="699" textLength="28" lengthAdjust="spacingAndGlyphs">150</text>
        </g>
        <path d="M900 727.500H1240" stroke="#8a8a8a" stroke-width="2"/>
      </svg>

      <div class="mt-[21px] ml-[10px] flex-1 min-h-0 bg-[#eaf3fb] border border-r-0 border-b-0 border-[#b0c8e0] pl-[9px] pt-[9px] overflow-hidden">
        <div class="flex items-center gap-[6px] h-[14px] text-[#333]"><svg class="w-[14px] h-[12px]" viewBox="0 0 14 12"><rect width="14" height="12" fill="#3a9ae0"/><path d="M2 9l4-4 3 3 3-2v4H2z" fill="#e8f4fc"/></svg>插入图片</div>
        <div class="mt-[3px] h-[30px] bg-white border border-[#b8cce0] pl-[6px] pt-[6px] whitespace-nowrap text-[13px] text-[#bbb]">回答即可得2分贡献分，回答被采纳获得系统赠送20贡献分及提问者悬赏分</div>
      </div>
    </div>
    <div class="relative h-[14px] shrink-0 bg-[linear-gradient(#cfdcf8,#aac0f0)] border-t border-[#9ab0e0] text-[#6a86c0] text-[10px] pl-[80px] leading-[13px]">||||</div>
    <div class="h-[4px] shrink-0 bg-[#f4f4f4]"></div>
  </div>
</div>

<!-- red callout arrows drawn over both windows -->
<svg class="absolute inset-0 w-[1240px] h-[818px] pointer-events-none" viewBox="0 0 1240 818">
  <defs>
    <marker id="head" markerUnits="userSpaceOnUse" markerWidth="22" markerHeight="18" refX="8" refY="9" orient="auto"><path d="M0 2L17 9L0 16L4 9Z" fill="#e81010"/></marker>
  </defs>
  <g stroke="#e81010" stroke-width="3.500" fill="none">
    <path d="M1045 168L128 31" marker-end="url(#head)"/>
    <path d="M125 55L243 129" marker-end="url(#head)"/>
    <path d="M273 145L435 288" marker-end="url(#head)"/>
    <path d="M453 324L396 767" marker-end="url(#head)"/>
    <path d="M395 792L1102 574" marker-end="url(#head)"/>
    <path d="M1070 528L571 400" marker-end="url(#head)"/>
  </g>
</svg>
</body>
</html>
